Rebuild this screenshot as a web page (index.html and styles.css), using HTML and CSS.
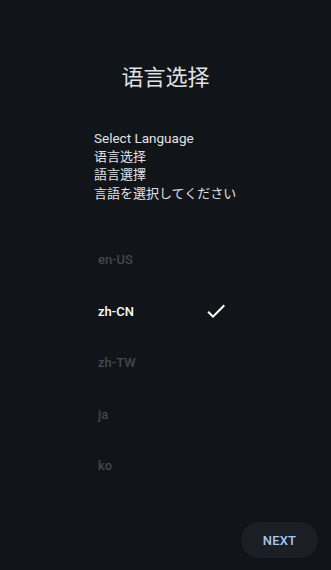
FILE: index.html
```html
<!DOCTYPE html>
<html>
<head>
<meta charset="utf-8">
<link rel="stylesheet" href="styles.css">
</head>
<body>
<div class="screen">
  <h1 class="title">语言选择</h1>
  <div class="prompt">
    <div class="latin">Select Language</div>
    <div>语言选择</div>
    <div>語言選擇</div>
    <div>言語を選択してください</div>
  </div>
  <ul class="langs">
    <li class="lang">en-US</li>
    <li class="lang active">zh-CN
      <svg class="check" viewBox="0 0 24 24" width="24" height="24"><path d="M9 16.17L4.83 12l-1.42 1.41L9 19 21 7l-1.41-1.41z" fill="#ffffff"/></svg>
    </li>
    <li class="lang">zh-TW</li>
    <li class="lang">ja</li>
    <li class="lang">ko</li>
  </ul>
  <div class="footer">
    <button class="next">NEXT</button>
  </div>
</div>
</body>
</html>
```

FILE: styles.css
```css
html, body {
  margin: 0;
  padding: 0;
  background: #111419;
  height: 100%;
}
.screen {
  height: 570px;
  display: flex;
  flex-direction: column;
  font-family: Roboto, "Noto Sans CJK SC", "Noto Sans CJK JP", sans-serif;
  color: #e2e2e6;
}
.title {
  margin: 64px 0 0 0;
  font-size: 22px;
  line-height: 28px;
  font-weight: 400;
  text-align: center;
  color: #e2e2e6;
}
.prompt {
  margin: 37px 0 0 94px;
  font-size: 13px;
  line-height: 18.5px;
  color: #e2e2e6;
}
.latin {
  font-size: 13.5px;
}
.langs {
  list-style: none;
  margin: 31px 0 0 0;
  padding: 0 0 0 98px;
}
.lang {
  height: 51.5px;
  display: flex;
  align-items: center;
  font-size: 13px;
  font-weight: 500;
  color: #44474e;
  position: relative;
  width: 130px;
}
.lang.active {
  color: #ffffff;
}
.check {
  position: absolute;
  left: 106px;
  top: 13px;
}
.footer {
  margin-top: auto;
  display: flex;
  justify-content: flex-end;
  padding: 0 13px 12px 0;
}
.next {
  width: 77px;
  height: 36px;
  border: none;
  border-radius: 18px;
  background: #1b1e24;
  color: #a9c7ef;
  font-family: Roboto, sans-serif;
  font-size: 13px;
  font-weight: 500;
  letter-spacing: 0.2px;
}
```
